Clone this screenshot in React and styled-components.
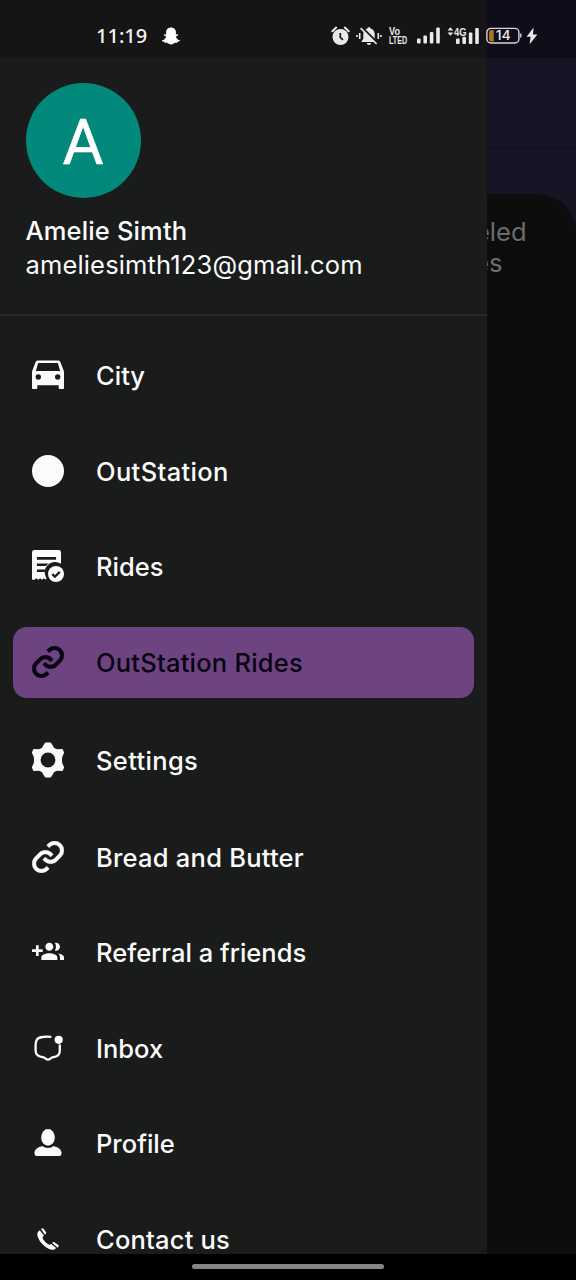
import React from "react";
import styled, { createGlobalStyle } from "styled-components";
import { BiLink } from "react-icons/bi";
import { FaSnapchatGhost } from "react-icons/fa";

const GlobalStyle = createGlobalStyle`
  * { box-sizing: border-box; }
  body { margin: 0; background: #000; font-family: Inter, "Noto Sans", sans-serif; }
`;

const Screen = styled.div`
  position: relative;
  display: flex;
  flex-direction: column;
  width: 576px;
  height: 1280px;
  overflow: hidden;
  background: #181426;
`;

const StatusBar = styled.header`
  position: absolute;
  inset: 0 0 auto 0;
  z-index: 3;
  display: flex;
  align-items: center;
  height: 58px;
  padding: 14px 38px 1px 96px;
  color: #e9e9e9;
  background: linear-gradient(90deg, #151515 487px, #100d1a 487px);
`;

const Clock = styled.span`
  width: 66px;
  font: 500 20px/26px "Noto Sans", sans-serif;
  letter-spacing: 0;
  color: #f4f4f4;
`;

const StatusIcons = styled.div`
  display: flex;
  align-items: center;
  margin-left: auto;
  svg { display: block; }
`;

const Gap = styled.i`
  width: ${(p) => p.$w}px;
`;

const Volte = styled.span`
  display: flex;
  flex-direction: column;
  width: 20px;
  font: 700 10px/9px "Liberation Sans", sans-serif;
`;

const VolteLine = styled.span`
  width: max-content;
  height: 9px;
  transform: scaleX(${(p) => p.$squeeze});
  transform-origin: left;
`;

const AppBar = styled.div`
  height: 147px;
  flex: none;
  background: #181426;
  box-shadow: 0 1px 5px rgba(0, 0, 0, 0.3);
`;

const Sheet = styled.main`
  flex: 1;
  margin-top: 47px;
  padding: 23px 49.5px 0 472px;
  border-radius: 0 38px 0 0;
  background: #0b0e0d;
  color: #6b6c6c;
  font-size: 25.5px;
  line-height: 30.5px;
`;

const SheetLine = styled.div`
  white-space: nowrap;
  text-align: right;
  padding-right: ${(p) => p.$end || 0}px;
`;

const Drawer = styled.aside`
  position: absolute;
  inset: 0 auto 26px 0;
  z-index: 2;
  width: 487px;
  padding-top: 83px;
  overflow: hidden;
  background: #1a1c1b;
  color: #fbfbfb;
`;

const Account = styled.section`
  height: 233px;
  padding-left: 25.5px;
  border-bottom: 2px solid #272928;
`;

const Avatar = styled.div`
  display: flex;
  align-items: center;
  justify-content: center;
  width: 115px;
  height: 115px;
  padding-top: 4px;
  border-radius: 50%;
  background: #03897b;
  color: #fff;
  font: 400 63px/1 Roboto, sans-serif;
  -webkit-text-stroke: 0.5px #fff;
`;

const Name = styled.div`
  margin-top: 16px;
  font-weight: 500;
  font-size: 25.5px;
  line-height: 34px;
  letter-spacing: 0.15px;
`;

const Email = styled.div`
  font-size: 25.5px;
  line-height: 33px;
  letter-spacing: 0.15px;
`;

const Menu = styled.nav`
  display: flex;
  flex-direction: column;
  gap: 25.5px;
  padding: 24.3px 13px 0;
`;

const MenuItem = styled.a`
  display: flex;
  align-items: center;
  flex: none;
  height: ${(p) => (p.$tall ? 73 : p.$active ? 71 : 70)}px;
  padding-left: 19px;
  border-radius: 14px;
  background: ${(p) => (p.$active ? "#6e4382" : "transparent")};
  color: ${(p) => (p.$active ? "#080310" : "#fbfbfb")};
  svg { display: block; flex: none; }
`;

const Label = styled.span`
  margin-left: 32px;
  padding-top: 2px;
  font-weight: 500;
  font-size: 25.5px;
  line-height: 32px;
  letter-spacing: ${(p) => p.$track || 0}px;
  white-space: nowrap;
`;

const NavBar = styled.footer`
  position: absolute;
  inset: auto 0 0 0;
  z-index: 3;
  display: flex;
  justify-content: center;
  height: 26px;
  padding-top: 10px;
  background: #000;
`;

const Handle = styled.div`
  width: 192px;
  height: 5px;
  border-radius: 3px;
  background: #858585;
`;

const AlarmIcon = () => (
  <svg width="19" height="20" viewBox="0 0 19 20">
    <circle cx="9.5" cy="11" r="8" fill="currentColor" />
    <path d="M1.3 5.2 5.2 1.6M17.7 5.2 13.8 1.6" stroke="currentColor" strokeWidth="2" strokeLinecap="round" />
    <path d="M9.3 7v4.4l2.7 2.4" fill="none" stroke="#151515" strokeWidth="1.7" />
  </svg>
);

const MuteIcon = () => (
  <svg width="26" height="20" viewBox="0 0 26 20">
    <path d="M13 1.2c1 0 1.5.5 1.5 1.3 2.8.8 4.2 2.8 4.2 5.7v4.6l1.8 2.4v.8H5.5v-.8l1.8-2.4V8.2c0-2.9 1.4-4.9 4.2-5.7 0-.8.5-1.3 1.5-1.3ZM10.8 17h4.4c-.2 1.2-1 2-2.2 2s-2-.8-2.2-2Z" fill="currentColor" />
    <path d="M5.8 1.2 21.6 17" stroke="#151515" strokeWidth="2.2" />
    <path d="M4.6 2.2 20.6 18" stroke="currentColor" strokeWidth="1.7" />
    <path d="M3.7 7v6M22.3 7v6M1 9v2M25 9v2" stroke="currentColor" strokeWidth="1.6" />
  </svg>
);

const SignalIcon = () => (
  <svg width="23" height="17" viewBox="0 0 23 17" fill="currentColor">
    <rect y="11.5" width="3.6" height="5" rx="1" />
    <rect x="6.4" y="8.5" width="3.6" height="8" rx="1" />
    <rect x="12.8" y="5" width="3.6" height="11.5" rx="1" />
    <rect x="19.2" y="0.5" width="3.6" height="16" rx="1" />
  </svg>
);

const DataSignalIcon = () => (
  <svg width="32" height="20" viewBox="0 0 32 20" fill="currentColor">
    <path d="M.5 4.4 3.4 1.2l2.9 3.2ZM.5 6.6l2.9 3.2 2.9-3.2Z" />
    <text x="7" y="9.6" fontSize="11.5" fontWeight="700" fontFamily="Liberation Sans" textLength="12.5" lengthAdjust="spacingAndGlyphs">4G</text>
    <rect x="9" y="12.4" width="3.6" height="5.6" rx="1" />
    <rect x="15.4" y="10.8" width="3.6" height="7.2" rx="1" />
    <rect x="21.8" y="6.4" width="3.6" height="11.6" rx="1" />
    <rect x="28.2" y="2" width="3.6" height="16" rx="1" />
  </svg>
);

const BatteryIcon = () => (
  <svg width="36" height="18" viewBox="0 0 36 18">
    <rect x="0.9" y="1.4" width="32" height="14.6" rx="4" fill="none" stroke="#d6d4dc" strokeWidth="1.4" />
    <path d="M3 5.2Q3 3 5.2 3h2.6v11.4H5.2Q3 14.4 3 12.2Z" fill="#a9741b" />
    <path d="M34.8 6.6v4" stroke="#d6d4dc" strokeWidth="1.4" />
    <text x="9.7" y="13.2" fill="#e9e9e9" fontSize="12.5" fontWeight="500" fontFamily="Inter" textLength="15" lengthAdjust="spacingAndGlyphs">14</text>
  </svg>
);

const BoltIcon = () => (
  <svg width="12" height="18" viewBox="0 0 12 18">
    <path d="M7.6.6.6 9.8h4L3.6 17.2 11.4 7.4H7Z" fill="currentColor" />
  </svg>
);

const CarIcon = () => (
  <svg width="32" height="32" viewBox="0 0 32 32">
    <path
      fill="currentColor"
      fillRule="evenodd"
      d="M5.6 1.6h20.8q1.5 0 2 1.5L32 12.6V29q0 1-1 1h-3.3q-1 0-1-1v-2.7H5.3V29q0 1-1 1H1q-1 0-1-1V12.6L3.6 3.1q.5-1.5 2-1.5ZM6.2 4L3.8 12h24.4L25.8 4ZM6.3 15.3a2.7 2.7 0 1 0 0 5.4 2.7 2.7 0 0 0 0-5.4Zm19.4 0a2.7 2.7 0 1 0 0 5.4 2.7 2.7 0 0 0 0-5.4Z"
    />
  </svg>
);

const DotIcon = () => (
  <svg width="32" height="32" viewBox="0 0 32 32">
    <circle cx="16" cy="16" r="16" fill="currentColor" />
  </svg>
);

const ReceiptIcon = () => (
  <svg width="32" height="32" viewBox="0 0 32 32">
    <path
      fill="currentColor"
      fillRule="evenodd"
      d="M2.4 0h24.2q2.4 0 2.4 2.4v11.4a10.4 10.4 0 0 0-14.9 13.8l.4 1.2-1.2.8-1.4-1.3-1.9 1.5-1.9-1.5-1.9 1.5-1.9-1.5L2 30l-2-.4V2.4Q0 0 2.4 0ZM4.9 6.9v2.9h19.2V6.9ZM4.9 13.5v2.4H14q1.4-1.5 2.8-2.4ZM4.9 19.6V22h7.8q.1-1.2.6-2.4Z"
    />
    <circle cx="24" cy="24" r="8" fill="currentColor" />
    <path d="m20.3 24.2 2.6 2.5 4.9-4.8" fill="none" stroke="#1a1c1b" strokeWidth="2.3" />
  </svg>
);

const ChainIcon = styled(BiLink)`
  stroke: currentColor;
  stroke-width: 0.22px;
`;

const LinkIcon = () => <ChainIcon size={32} viewBox="3.4 3.4 17.2 17.2" />;

const GearIcon = () => (
  <svg width="32" height="36" viewBox="0 0 32 36">
    <path
      fill="currentColor"
      fillRule="evenodd"
      d="M14.2.4h3.6q1.2 0 1.7 1l1.8 3.4q.6 1.1 1.8 1.6l.7.4q1 .6 2.3.4l3.2-.3q1-.1 1.5.7l1.1 2.3q.4 1-.2 1.8l-1.2 2.5q-.5 1.3-.5 3.8t.5 3.8l1.2 2.5q.6.8.2 1.8l-1.1 2.3q-.5.8-1.5.7l-3.2-.3q-1.3-.2-2.3.4l-.7.4q-1.2.5-1.8 1.6l-1.8 3.4q-.5 1-1.7 1h-3.6q-1.2 0-1.7-1l-1.8-3.4q-.6-1.1-1.8-1.6l-.7-.4q-1-.6-2.3-.4l-3.2.3q-1 .1-1.5-.7L.1 26.1q-.4-1 .2-1.8l1.2-2.5Q2 20.500 2 18t-.5-3.800L.3 11.700q-.6-.8-.2-1.800l1.100-2.300q.5-.8 1.500-.7l3.200.3q1.300.2 2.300-.4l.7-.4q1.200-.5 1.800-1.600l1.800-3.400q.5-1 1.700-1ZM16 10.600a7.400 7.400 0 1 0 0 14.800 7.400 7.400 0 0 0 0-14.800Z"
    />
  </svg>
);

const GroupAddIcon = () => (
  <svg width="32" height="32" viewBox="0 0 24 24" fill="currentColor">
    <path d="M8 10H5V7H3v3H0v2h3v3h2v-3h3v-2zm10 1c1.66 0 2.99-1.34 2.99-3S19.66 5 18 5c-.32 0-.63.05-.91.14.57.81.9 1.79.9 2.86s-.34 2.04-.9 2.86c.28.09.59.14.91.14zm-5 0c1.66 0 2.99-1.34 2.99-3S14.66 5 13 5s-3 1.340-3 3 1.340 3 3 3zm6.620 2.160c.83.73 1.380 1.660 1.380 2.840v2h3v-2c0-1.540-2.370-2.490-4.380-2.840zM13 13c-2 0-6 1-6 3v2h12v-2c0-2-4-3-6-3z" />
  </svg>
);

const InboxIcon = () => (
  <svg width="32" height="32" viewBox="0 0 32 32">
    <path
      d="M18.400 4.800Q14 4.500 10.500 5 6.500 5.400 5 7.500 3.600 9.500 3.600 14v4.300q0 5.300 4.800 6.300 2.800.3 4.200 1.300 1.800 1.800 3.400 1.800t3.400-1.800q1.400-1 4.200-1.300 4.200-1 4.200-6.300v-5"
      fill="none"
      stroke="currentColor"
      strokeWidth="2.3"
      strokeLinecap="round"
    />
    <circle cx="26.700" cy="7.800" r="4.100" fill="currentColor" />
  </svg>
);

const PersonIcon = () => (
  <svg width="32" height="32" viewBox="0 0 32 32" fill="currentColor">
    <ellipse cx="16" cy="10.4" rx="6.8" ry="8.3" />
    <path d="M10.500 19q2 1.900 5.500 1.900t5.500-1.900c3.700.9 8 3 8 6.700 0 2.200-.7 3.200-2.200 3.200H4.700c-1.500 0-2.200-1-2.200-3.200 0-3.700 4.300-5.800 8-6.700Z" />
  </svg>
);

const PhoneIcon = () => (
  <svg width="32" height="32" viewBox="0 0 32 32" fill="currentColor">
    <path d="M7.700 7.200q-3.200 2.200-2.100 6.100c1.600 5.500 7.400 11.500 13.200 13.300q3.500 1 5.300-1.700l-4.900-4q-1.700 1.400-3.400.2-3.400-2.400-5-5.400-.8-1.600 1.100-3.400Z" />
    <path d="m9 6.100 1-.7q1-.4 1.700.5l2.200 3.200q.7 1.200-.2 2l-.8.5ZM20.200 20.100l.7-.8q.8-.6 1.800.1l3.600 2.500q.9.8.3 1.700l-.9 1.100Z" />
  </svg>
);

const items = [
  { label: "City", Icon: CarIcon },
  { label: "OutStation", Icon: DotIcon, track: 0.36 },
  { label: "Rides", Icon: ReceiptIcon },
  { label: "OutStation Rides", Icon: LinkIcon, active: true, track: 0.22 },
  { label: "Settings", Icon: GearIcon, tall: true, track: 0.35 },
  { label: "Bread and Butter", Icon: LinkIcon, track: 0.24 },
  { label: "Referral a friends", Icon: GroupAddIcon },
  { label: "Inbox", Icon: InboxIcon },
  { label: "Profile", Icon: PersonIcon },
  { label: "Contact us", Icon: PhoneIcon, track: 0.2 },
];

export default function App() {
  return (
    <Screen>
      <GlobalStyle />
      <StatusBar>
        <Clock>11:19</Clock>
        <FaSnapchatGhost size={18} color="#fff" />
        <StatusIcons>
          <AlarmIcon />
          <Gap $w={6} />
          <MuteIcon />
          <Gap $w={7} />
          <Volte>
            <VolteLine $squeeze={0.92}>Vo</VolteLine>
            <VolteLine $squeeze={0.72}>LTED</VolteLine>
          </Volte>
          <Gap $w={8} />
          <SignalIcon />
          <Gap $w={7} />
          <DataSignalIcon />
          <Gap $w={7} />
          <BatteryIcon />
          <Gap $w={4} />
          <BoltIcon />
        </StatusIcons>
      </StatusBar>
      <AppBar />
      <Sheet>
        <SheetLine>eled</SheetLine>
        <SheetLine $end={24}>es</SheetLine>
      </Sheet>
      <Drawer>
        <Account>
          <Avatar>A</Avatar>
          <Name>Amelie Simth</Name>
          <Email>ameliesimth123@gmail.com</Email>
        </Account>
        <Menu>
          {items.map(({ label, Icon, active, tall, track }) => (
            <MenuItem key={label} $active={active} $tall={tall}>
              <Icon />
              <Label $track={track}>{label}</Label>
            </MenuItem>
          ))}
        </Menu>
      </Drawer>
      <NavBar>
        <Handle />
      </NavBar>
    </Screen>
  );
}
